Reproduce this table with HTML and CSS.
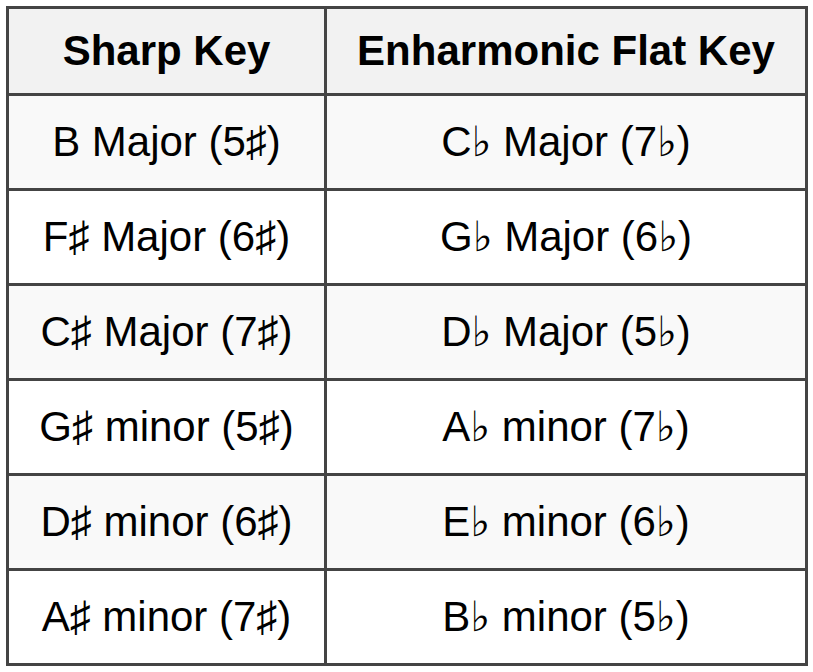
FILE: index.html
```html
<!DOCTYPE html>
<html>
<head>
<meta charset="utf-8">
<link rel="stylesheet" href="styles.css">
</head>
<body>
<table class="keys">
  <colgroup><col class="c1"><col class="c2"></colgroup>
  <thead>
    <tr><th>Sharp Key</th><th>Enharmonic Flat Key</th></tr>
  </thead>
  <tbody>
    <tr><td>B Major (5♯)</td><td>C♭ Major (7♭)</td></tr>
    <tr><td>F♯ Major (6♯)</td><td>G♭ Major (6♭)</td></tr>
    <tr><td>C♯ Major (7♯)</td><td>D♭ Major (5♭)</td></tr>
    <tr><td>G♯ minor (5♯)</td><td>A♭ minor (7♭)</td></tr>
    <tr><td>D♯ minor (6♯)</td><td>E♭ minor (6♭)</td></tr>
    <tr><td>A♯ minor (7♯)</td><td>B♭ minor (5♭)</td></tr>
  </tbody>
</table>
</body>
</html>
```
FILE: styles.css
```css
html, body {
  margin: 0;
  padding: 0;
  background: #ffffff;
}
body {
  padding: 6px;
  font-family: "Liberation Sans", Arial, "DejaVu Sans", sans-serif;
  color: #000;
}
.keys {
  border-collapse: collapse;
  table-layout: fixed;
  width: 802px;
  font-size: 42px;
}
.c1 { width: 318px; }
.c2 { width: 481px; }
.keys th, .keys td {
  border: 3px solid #444444;
  text-align: center;
  padding: 0;
  line-height: 48px;
}
.keys th {
  background: #f2f2f2;
  font-weight: bold;
  height: 84px;
}
.keys td {
  height: 92px;
}
.keys tbody tr:nth-child(odd) td { background: #f9f9f9; }
.keys tbody tr:nth-child(even) td { background: #ffffff; }
```
